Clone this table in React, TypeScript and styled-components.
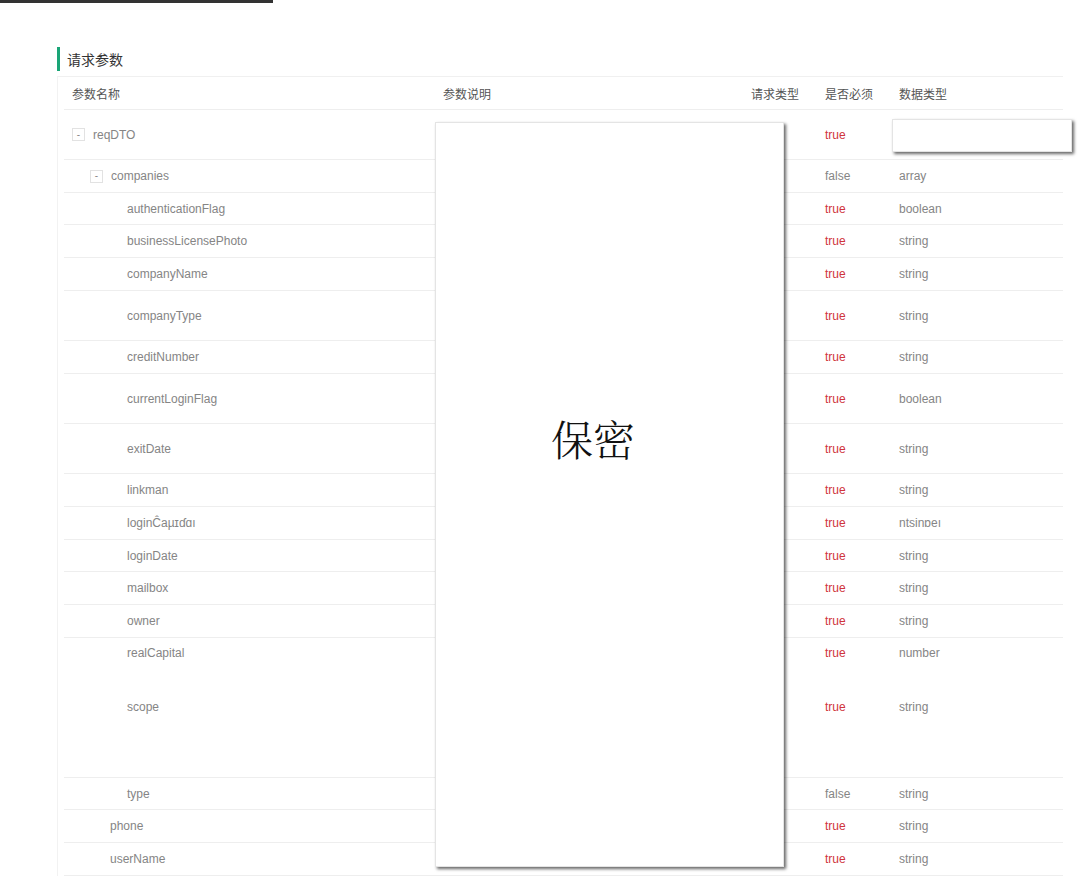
import React from "react";
import styled, { createGlobalStyle } from "styled-components";

const Global = createGlobalStyle`
  html, body { margin: 0; padding: 0; background: #fff; }
  body { font-family: "Liberation Sans", Arial, "Noto Sans CJK SC", sans-serif; }
`;

const Page = styled.div`
  position: relative;
  width: 1080px;
  height: 877px;
  overflow: hidden;
  background: #fff;
`;

const TopBar = styled.div`
  width: 273px;
  height: 3px;
  background: #333;
`;

const Content = styled.div`
  padding: 44px 0 0 57px;
  width: 1006px;
`;

const Title = styled.div`
  display: flex;
  align-items: center;
  height: 24px;
  border-left: 3px solid #1aa577;
  padding-left: 7px;
  font-family: "Noto Sans CJK SC", sans-serif;
  font-size: 14px;
  color: #333;
  margin-bottom: 5px;
`;

const TableWrap = styled.div`
  border-top: 1px solid #f0f0f0;
  border-left: 1px solid #f2f2f2;
  padding-left: 6px;
  width: 999px;
`;

const Row = styled.div<{ $h: number; $noBorder?: boolean; $top?: number }>`
  display: grid;
  grid-template-columns: 371px 308px 74px 74px 172px;
  height: ${(p) => p.$h}px;
  box-sizing: border-box;
  border-bottom: 1px solid ${(p) => (p.$noBorder ? "transparent" : "#eee")};
  align-items: ${(p) => (p.$top !== undefined ? "start" : "center")};
  padding-top: ${(p) => p.$top ?? 0}px;
`;

const HeadCell = styled.div`
  padding-left: 8px;
  font-family: "Noto Sans CJK SC", sans-serif;
  font-size: 12px;
  color: #555;
`;

const Cell = styled.div<{ $red?: boolean }>`
  padding-left: 8px;
  font-size: 12px;
  color: ${(p) => (p.$red ? "#d0353c" : "#858585")};
`;

const NameCell = styled.div<{ $indent: number }>`
  display: flex;
  align-items: center;
  gap: 8px;
  padding-left: ${(p) => 8 + p.$indent}px;
  font-size: 12px;
  color: #858585;
`;

const Toggle = styled.span`
  display: inline-flex;
  align-items: center;
  justify-content: center;
  width: 11px;
  height: 11px;
  border: 1px solid #e2e2e2;
  font-size: 10px;
  line-height: 1;
  color: #888;
`;

const SecretBox = styled.div`
  position: absolute;
  left: 435px;
  top: 122px;
  width: 347px;
  height: 743px;
  background: #fff;
  border: 1px solid #e4e4e4;
  box-shadow: 2px 2px 3px rgba(0, 0, 0, 0.6);
  display: flex;
  align-items: center;
  justify-content: center;
`;

const SecretText = styled.div`
  font-family: "Noto Serif CJK SC", "Noto Sans CJK SC", serif;
  font-size: 42px;
  font-weight: 300;
  color: #111;
  margin-top: -114px;
  margin-left: -33px;
`;

const SmallBox = styled.div`
  position: absolute;
  left: 892px;
  top: 119px;
  width: 178px;
  height: 31px;
  background: #fff;
  border: 1px solid #e4e4e4;
  box-shadow: 2px 2px 3px rgba(0, 0, 0, 0.6);
`;

type R = {
  name: string;
  indent: number;
  toggle?: boolean;
  req: string;
  type: string;
  h: number;
  noBorder?: boolean;
  top?: number;
};

const rows: R[] = [
  { name: "reqDTO", indent: 0, toggle: true, req: "true", type: "", h: 50 },
  { name: "companies", indent: 18, toggle: true, req: "false", type: "array", h: 33 },
  { name: "authenticationFlag", indent: 55, req: "true", type: "boolean", h: 32 },
  { name: "businessLicensePhoto", indent: 55, req: "true", type: "string", h: 33 },
  { name: "companyName", indent: 55, req: "true", type: "string", h: 33 },
  { name: "companyType", indent: 55, req: "true", type: "string", h: 50 },
  { name: "creditNumber", indent: 55, req: "true", type: "string", h: 33 },
  { name: "currentLoginFlag", indent: 55, req: "true", type: "boolean", h: 50 },
  { name: "exitDate", indent: 55, req: "true", type: "string", h: 50 },
  { name: "linkman", indent: 55, req: "true", type: "string", h: 33 },
  { name: "loginĈaµɪɗɑı", indent: 55, req: "true", type: "ntsinɒeı", h: 33 },
  { name: "loginDate", indent: 55, req: "true", type: "string", h: 32 },
  { name: "mailbox", indent: 55, req: "true", type: "string", h: 33 },
  { name: "owner", indent: 55, req: "true", type: "string", h: 33 },
  { name: "realCapital", indent: 55, req: "true", type: "number", h: 30, noBorder: true },
  { name: "scope", indent: 55, req: "true", type: "string", h: 110, top: 32 },
  { name: "type", indent: 55, req: "false", type: "string", h: 32 },
  { name: "phone", indent: 38, req: "true", type: "string", h: 33 },
  { name: "userName", indent: 38, req: "true", type: "string", h: 33 },
];

export default function App() {
  return (
    <Page>
      <Global />
      <TopBar />
      <Content>
        <Title>请求参数</Title>
        <TableWrap>
          <Row $h={33}>
            <HeadCell>参数名称</HeadCell>
            <HeadCell>参数说明</HeadCell>
            <HeadCell>请求类型</HeadCell>
            <HeadCell>是否必须</HeadCell>
            <HeadCell>数据类型</HeadCell>
          </Row>
          {rows.map((r) => (
            <Row key={r.name} $h={r.h} $noBorder={r.noBorder} $top={r.top}>
              <NameCell $indent={r.indent}>
                {r.toggle && <Toggle>-</Toggle>}
                <span>{r.name}</span>
              </NameCell>
              <Cell />
              <Cell />
              <Cell $red={r.req === "true"}>{r.req}</Cell>
              <Cell>{r.type}</Cell>
            </Row>
          ))}
        </TableWrap>
      </Content>
      <SecretBox>
        <SecretText>保密</SecretText>
      </SecretBox>
      <SmallBox />
    </Page>
  );
}
